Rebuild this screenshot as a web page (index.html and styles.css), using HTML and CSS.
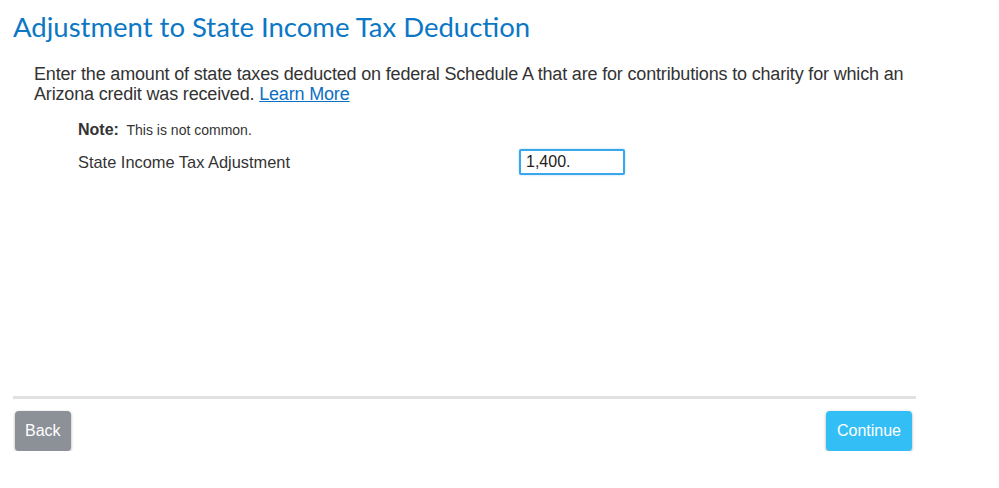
FILE: index.html
```html
<!DOCTYPE html>
<html>
<head>
<meta charset="utf-8">
<link rel="stylesheet" href="styles.css">
</head>
<body>
<div class="page">
  <h1 class="title">Adjustment to State Income Tax Deduction</h1>
  <p class="intro">Enter the amount of state taxes deducted on federal Schedule A that are for contributions to charity for which an Arizona credit was received. <a href="#" class="link">Learn More</a></p>
  <div class="form">
    <div class="note"><span class="note-label">Note:</span> This is not common.</div>
    <div class="row">
      <label class="label">State Income Tax Adjustment</label>
      <input class="field" type="text" value="1,400.">
    </div>
  </div>
  <div class="footer">
    <div class="buttons">
      <button class="btn btn-back">Back</button>
      <button class="btn btn-continue">Continue</button>
    </div>
  </div>
</div>
</body>
</html>
```
FILE: styles.css
```css
html, body { margin: 0; padding: 0; background: #fff; }
body { font-family: "Liberation Sans", Arial, sans-serif; color: #333; }
.page { padding: 10px 0 0 13px; width: 903px; }
.title {
  font-family: Lato, "Open Sans", sans-serif;
  font-weight: 400;
  font-size: 27.5px;
  line-height: 34px;
  color: #0b77c5;
  margin: 0;
}
.intro {
  font-size: 18px;
  letter-spacing: -0.17px;
  line-height: 20px;
  margin: 20px 0 0 21px;
  color: #333;
}
.link { color: #0d6fc2; text-decoration: underline; }
.form { padding-left: 65px; margin-top: 17px; }
.note { font-size: 14px; line-height: 18px; color: #333; }
.note-label { font-weight: bold; font-size: 16px; margin-right: 4px; }
.row { display: flex; align-items: center; margin-top: 10px; }
.label { width: 441px; font-size: 16.4px; color: #333; }
.field {
  box-sizing: border-box;
  width: 106px;
  height: 26px;
  border: 2px solid #3aa6ec;
  border-radius: 2px;
  padding: 0 5px;
  font-family: "Liberation Sans", Arial, sans-serif;
  font-size: 16px;
  color: #222;
  box-shadow: 0 0 2px rgba(58,166,236,0.5);
  outline: none;
}
.footer { margin-top: 221px; border-top: 3px solid #e1e1e1; }
.buttons { display: flex; justify-content: space-between; padding: 12px 4px 0 2px; }
.btn {
  height: 40px;
  border: none;
  border-radius: 4px;
  color: #fff;
  font-family: "Liberation Sans", Arial, sans-serif;
  font-size: 16px;
  padding: 0 11px;
  box-shadow: 0 1px 3px rgba(0,0,0,0.35);
}
.btn-back { background: #8c9097; padding: 0 10px; }
.btn-continue { background: #33bff6; }
```
